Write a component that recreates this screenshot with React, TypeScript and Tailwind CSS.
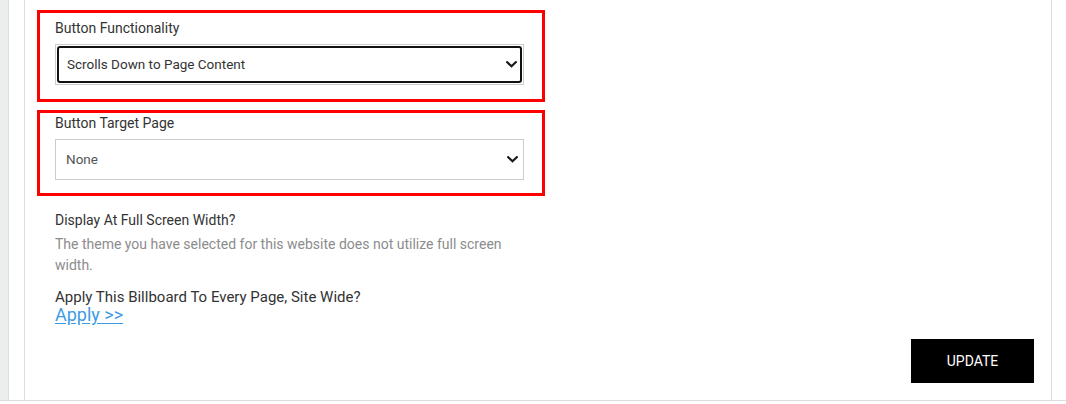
import React from "react";

function Chevron() {
  return (
    <svg width="11" height="7" viewBox="0 0 11 7" fill="none" className="shrink-0">
      <path d="M1.2 1.2 L5.5 5.3 L9.8 1.2" stroke="#1a1a1a" strokeWidth="2.2" strokeLinecap="square" />
    </svg>
  );
}

function FakeSelect({ value, focused, textClass }: { value: string; focused?: boolean; textClass: string }) {
  return (
    <div className="h-[41px] w-[469px] border border-[#cccccc] bg-white">
      {focused ? (
        <div className="m-[1px] flex h-[37px] items-center justify-between rounded-[3px] border-2 border-[#111111] pl-[8px] pr-[3px]">
          <span className={textClass}>{value}</span>
          <Chevron />
        </div>
      ) : (
        <div className="flex h-full items-center justify-between pl-[10px] pr-[5px]">
          <span className={textClass}>{value}</span>
          <Chevron />
        </div>
      )}
    </div>
  );
}

export default function App() {
  return (
    <div className="h-[404px] w-[1066px] bg-white font-['Roboto',_'Liberation_Sans',_sans-serif]">
      <div className="flex h-[401px] border-b border-[#dddddd]">
        <div className="w-[9px] border-r border-[#dddddd] bg-[#eceeed]" />
        <div className="w-[16px] border-r border-[#dddddd]" />
        <div className="flex w-[1027px] flex-col border-r border-[#dddddd] pl-[12px] pt-[10px]">
          <div className="w-[508px] border-[3px] border-[#ff0000] pb-[14px] pl-[15px] pt-[5px]">
            <div className="text-[14px] leading-[20px] text-[#333333]">Button Functionality</div>
            <div className="mt-[6px]">
              <FakeSelect value="Scrolls Down to Page Content" focused textClass="text-[13.5px] text-[#333333]" />
            </div>
          </div>
          <div className="mt-[8px] w-[508px] border-[3px] border-[#ff0000] pb-[13px] pl-[15px] pt-[1px]">
            <div className="-mt-[1px] text-[14px] leading-[20px] text-[#333333]">Button Target Page</div>
            <div className="mt-[6px]">
              <FakeSelect value="None" textClass="text-[13.5px] text-[#555555]" />
            </div>
          </div>
          <div className="ml-[18px] mt-[14px] w-[469px]">
            <div className="text-[14px] leading-[20px] text-[#333333]">Display At Full Screen Width?</div>
            <p className="mt-[4px] text-[14px] leading-[21px] text-[#8c8c8c]">
              The theme you have selected for this website does not utilize full screen width.
            </p>
            <div className="mt-[11px] text-[15px] leading-[20px] text-[#333333]">
              Apply This Billboard To Every Page, Site Wide?
            </div>
            <a href="#" className="-mt-[1px] block text-[18px] leading-[18px] text-[#3d9be3] underline underline-offset-2">
              Apply &gt;&gt;
            </a>
          </div>
          <div className="mt-auto flex justify-end pb-[17px] pr-[17px]">
            <button className="h-[44px] w-[123px] bg-black text-[14px] font-normal text-white">UPDATE</button>
          </div>
        </div>
      </div>
    </div>
  );
}
